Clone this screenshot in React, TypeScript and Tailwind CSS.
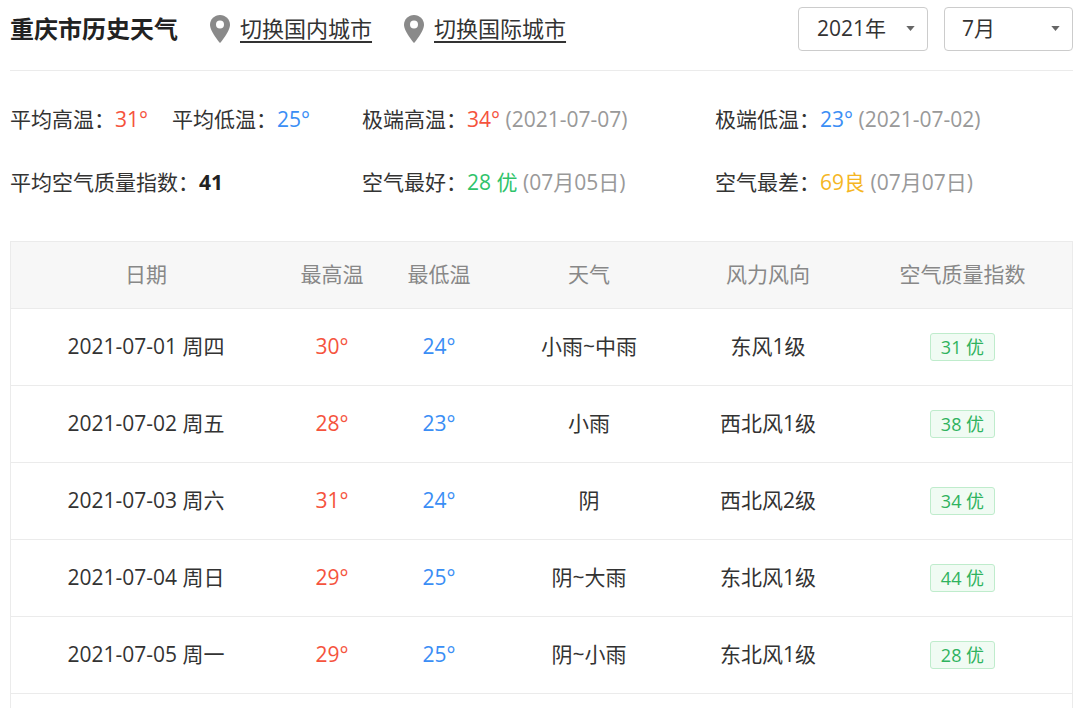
import React from "react";

const rows = [
  ["2021-07-01 周四", "30°", "24°", "小雨~中雨", "东风1级", "31 优"],
  ["2021-07-02 周五", "28°", "23°", "小雨", "西北风1级", "38 优"],
  ["2021-07-03 周六", "31°", "24°", "阴", "西北风2级", "34 优"],
  ["2021-07-04 周日", "29°", "25°", "阴~大雨", "东北风1级", "44 优"],
  ["2021-07-05 周一", "29°", "25°", "阴~小雨", "东北风1级", "28 优"],
  ["2021-07-06 周二", "30°", "24°", "阴", "东北风1级", "40 优"],
];

const Pin = () => (
  <svg width="20" height="28" viewBox="0 0 20 28" className="mr-[10px]">
    <path d="M10 0C4.5 0 0 4.3 0 9.7 0 16.5 10 28 10 28s10-11.5 10-18.3C20 4.3 15.5 0 10 0z" fill="#8a8a8a" />
    <circle cx="10" cy="9.5" r="4" fill="#fff" />
  </svg>
);

const Caret = () => (
  <svg width="9" height="5" viewBox="0 0 10 6"><path d="M0 0h10L5 6z" fill="#666" /></svg>
);

const cols = ["w-[270px]", "w-[102px]", "w-[112px]", "w-[188px]", "w-[170px]", "flex-1"];

export default function App() {
  return (
    <div className="w-[1080px] h-[708px] overflow-hidden bg-white text-[21px] text-[#333]" style={{ fontFamily: '"Open Sans", "Noto Sans CJK SC", sans-serif' }}>
      <div className="mx-[10px] w-[1063px] h-[71px] border-b border-[#ebebeb] flex items-center pb-[13px]">
        <div className="font-bold text-[24px] text-[#222] mr-[32px]">重庆市历史天气</div>
        <div className="flex items-center mr-[32px] text-[22px]"><Pin /><span className="underline underline-offset-4">切换国内城市</span></div>
        <div className="flex items-center text-[22px]"><Pin /><span className="underline underline-offset-4">切换国际城市</span></div>
        <div className="ml-auto flex gap-[16px]">
          <div className="w-[130px] h-[44px] border border-[#ccc] rounded-[4px] flex items-center justify-between pl-[18px] pr-[12px]"><span>2021年</span><Caret /></div>
          <div className="w-[129px] h-[44px] border border-[#ccc] rounded-[4px] flex items-center justify-between pl-[17px] pr-[12px]"><span>7月</span><Caret /></div>
        </div>
      </div>
      <div className="px-[10px]">
        <div className="flex h-[24px] items-center mt-[37px]">
          <div className="w-[352px] flex"><span>平均高温：<span className="text-[#f5533d]">31°</span></span><span className="ml-[24px]">平均低温：<span className="text-[#3a8ef5]">25°</span></span></div>
          <div className="w-[353px]">极端高温：<span className="text-[#f5533d]">34°</span> <span className="text-[#999]">(2021-07-07)</span></div>
          <div>极端低温：<span className="text-[#3a8ef5]">23°</span> <span className="text-[#999]">(2021-07-02)</span></div>
        </div>
        <div className="flex h-[24px] items-center mt-[39px]">
          <div className="w-[352px]">平均空气质量指数：<b className="text-[#222]">41</b></div>
          <div className="w-[353px]">空气最好：<span className="text-[#2fc36a]">28 优</span> <span className="text-[#999]">(07月05日)</span></div>
          <div>空气最差：<span className="text-[#f5b624]">69良</span> <span className="text-[#999]">(07月07日)</span></div>
        </div>
      </div>
      <div className="mx-[10px] mt-[46px] w-[1063px] border border-[#ebebeb]">
        <div className="flex h-[67px] items-center bg-[#f7f7f7] text-[#888] border-b border-[#ebebeb]">
          {["日期", "最高温", "最低温", "天气", "风力风向", "空气质量指数"].map((h, i) => (
            <div key={h} className={`${cols[i]} text-center`}>{h}</div>
          ))}
        </div>
        {rows.map((r) => (
          <div key={r[0]} className="flex h-[77px] items-center border-b border-[#ebebeb]">
            <div className={`${cols[0]} text-center`}>{r[0]}</div>
            <div className={`${cols[1]} text-center text-[#f5533d]`}>{r[1]}</div>
            <div className={`${cols[2]} text-center text-[#3a8ef5]`}>{r[2]}</div>
            <div className={`${cols[3]} text-center`}>{r[3]}</div>
            <div className={`${cols[4]} text-center`}>{r[4]}</div>
            <div className={`${cols[5]} flex justify-center`}>
              <span className="h-[28px] px-[10px] flex items-center text-[18px] text-[#2fb35e] bg-[#f0fbf3] border border-[#bfeccc] rounded-[3px]">{r[5]}</span>
            </div>
          </div>
        ))}
      </div>
    </div>
  );
}
